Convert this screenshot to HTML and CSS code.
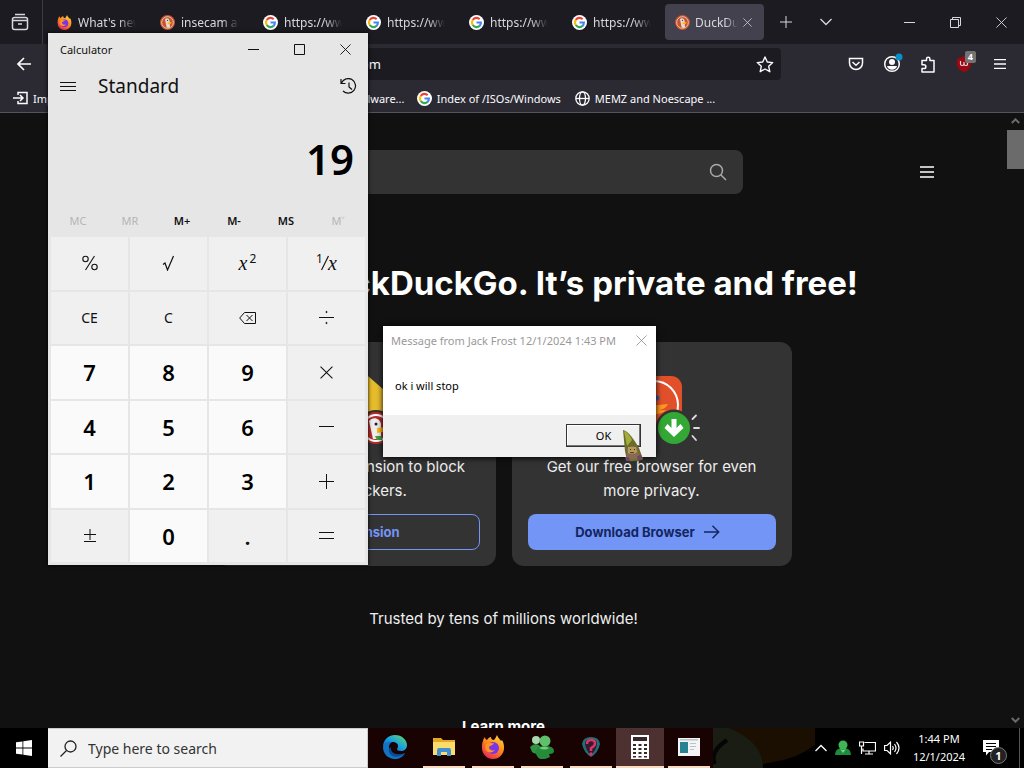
FILE: index.html
```html
<!DOCTYPE html>
<html lang="en">
<head>
<meta charset="utf-8">
<title>Desktop</title>
<link rel="stylesheet" href="styles.css">
</head>
<body>
<svg class="defs" aria-hidden="true">
  <defs>
    <linearGradient id="fox" x1="0.8" y1="0" x2="0.2" y2="1"><stop offset="0" stop-color="#ffd83a"/><stop offset=".45" stop-color="#ff8a1c"/><stop offset="1" stop-color="#e8215a"/></linearGradient>
    <linearGradient id="edge" x1="0" y1="1" x2="1" y2="0"><stop offset="0" stop-color="#0b55a8"/><stop offset=".5" stop-color="#1a9fe0"/><stop offset="1" stop-color="#6ade5c"/></linearGradient>
  </defs>
  <symbol id="i-firefox" viewBox="0 0 24 24"><path fill="url(#fox)" d="M2 6c0-1 1-3 2-4 0 2 1 2 2 3 1-2 3-3 4-3 0 2 1 3 3 3 1-1 2-3 3-5 1 3 3 4 4 6l1-1c2 3 2 6 2 8a11 11 0 0 1-22 0C1 10 1 8 2 6z"/><circle cx="12" cy="13" r="6" fill="#7a35e8"/><path fill="#ff9420" d="M5 9c3-2 5 0 8-1-1 3-4 2-5 4 0 3 3 4 6 3-3 4-9 3-10-2z"/></symbol>
  <symbol id="i-google" viewBox="0 0 18 18"><circle cx="9" cy="9" r="9" fill="#fff"/><g fill="none" stroke-width="2.500"><path stroke="#ea4335" d="M4.500 6A5.300 5.300 0 0 1 12.800 5"/><path stroke="#fbbc05" d="M4.500 12a5.500 5.500 0 0 1 0-6"/><path stroke="#34a853" d="M12.800 13A5.300 5.300 0 0 1 4.500 12"/><path stroke="#4285f4" d="M9 9h5.300c0 2-.6 3.200-1.700 4.200"/></g></symbol>
  <symbol id="i-duck" viewBox="0 0 18 18"><circle cx="9" cy="9" r="9" fill="#c9532f"/><circle cx="9" cy="9" r="7" fill="none" stroke="#e8d8cc" stroke-width="1"/><path fill="#e8dccf" d="M6 5c2-2 5-1 5.500 2l.5 8c-2 1-3 0-4 0z"/><path fill="#fdb813" d="M9 9l5-.5-1 2-4 .5z"/><circle cx="9" cy="6.500" r=".8" fill="#2d4f8e"/></symbol>
  <symbol id="i-x" viewBox="0 0 12 12"><path fill="none" stroke="currentColor" d="M.5.5l11 11M11.500.5l-11 11"/></symbol>
  <symbol id="i-menu" viewBox="0 0 16 14"><path fill="none" stroke="currentColor" stroke-width="1.500" d="M1 2h14M1 7h14M1 12h14"/></symbol>
</svg>

<div class="desktop">
  <section class="browser" aria-label="Firefox">
    <div class="tabstrip">
      <button class="recent" aria-label="Recent browsing"><svg width="18" height="18" viewBox="0 0 18 18" fill="none" stroke="currentColor" stroke-width="1.500"><path d="M4 1.500h10"/><rect x="1.500" y="4.500" width="15" height="12" rx="2"/><path d="M2 7.500h14M7 11h4"/></svg></button>
      <div class="tabs">
        <button class="tab"><svg class="fav"><use href="#i-firefox"/></svg><span>What's new</span></button>
        <button class="tab"><svg class="fav"><use href="#i-duck"/></svg><span>insecam at D</span></button>
        <button class="tab"><svg class="fav"><use href="#i-google"/></svg><span>https://www.</span></button>
        <button class="tab"><svg class="fav"><use href="#i-google"/></svg><span>https://www.</span></button>
        <button class="tab"><svg class="fav"><use href="#i-google"/></svg><span>https://www.</span></button>
        <button class="tab"><svg class="fav"><use href="#i-google"/></svg><span>https://www.</span></button>
        <button class="tab active"><svg class="fav"><use href="#i-duck"/></svg><span>DuckDuck</span><svg class="tabx"><use href="#i-x"/></svg></button>
      </div>
      <button class="stripbtn" aria-label="New tab"><svg width="12" height="12" viewBox="0 0 12 12" stroke="currentColor"><path d="M6 0v12M0 6h12"/></svg></button>
      <button class="stripbtn" aria-label="List tabs"><svg width="12" height="8" viewBox="0 0 12 8" fill="none" stroke="currentColor" stroke-width="1.300"><path d="M.5 1L6 6.500 11.500 1"/></svg></button>
      <div class="winbtns">
        <button aria-label="Minimize"><svg width="11" height="11" stroke="currentColor"><path d="M0 5.500h11"/></svg></button>
        <button aria-label="Restore"><svg width="11" height="11" fill="none" stroke="currentColor"><path d="M.5 2.500h8v8h-8zM2.500 2.500v-2h8v8h-2"/></svg></button>
        <button aria-label="Close"><svg width="11" height="11"><use href="#i-x"/></svg></button>
      </div>
    </div>

    <div class="navbar">
      <button class="navbtn back" aria-label="Back"><svg width="16" height="14" viewBox="0 0 16 14" fill="none" stroke="currentColor" stroke-width="1.700"><path d="M15 7H2M8 1L2 7l6 6"/></svg></button>
      <div class="urlbar">
        <input type="text" aria-label="Address" value="https://duckduckgo.com">
        <svg width="18" height="17" viewBox="0 0 18 17" fill="none" stroke="currentColor" stroke-width="1.400" stroke-linejoin="round"><path d="M9 1l2.300 5 5.400.6-4 3.700 1.100 5.400L9 13l-4.800 2.700 1.100-5.400-4-3.700L6.700 6z"/></svg>
      </div>
      <div class="navicons">
        <button class="navbtn" aria-label="Pocket"><svg width="16" height="14" viewBox="0 0 16 14" fill="none" stroke="currentColor" stroke-width="1.500"><path d="M1.500 1.500h13v4.500a6.500 6.500 0 0 1-13 0z"/><path d="M4.500 5L8 8.200 11.500 5"/></svg></button>
        <button class="navbtn" aria-label="Account"><svg width="18" height="18" viewBox="0 0 18 18" overflow="visible"><circle cx="9" cy="9" r="7.300" fill="none" stroke="currentColor" stroke-width="1.500"/><circle cx="9" cy="7" r="3" fill="currentColor"/><path fill="currentColor" d="M4 11h10c-1 5-9 5-10 0z"/><circle cx="16" cy="2" r="3.500" fill="#0a90c8"/></svg></button>
        <button class="navbtn" aria-label="Extensions"><svg width="16" height="17" viewBox="0 0 16 17" fill="none" stroke="currentColor" stroke-width="1.500" stroke-linejoin="round"><path d="M2 4.500h4.500V3a1.700 1.700 0 0 1 3.400 0v1.500H14V16H2v-3.500h2a1.800 1.800 0 0 0 0-3.700H2z"/></svg></button>
        <button class="navbtn ublock" aria-label="uBlock"><svg width="16" height="16" viewBox="0 0 16 16"><path fill="#9c0710" d="M8 0l7 3v6c0 3-4 6-7 7-3-1-7-4-7-7V3z"/><path fill="none" stroke="#ddd" stroke-width="1.200" d="M4.500 5v3q0 1.500 1.700 1.500T8 8V6v2q0 1.500 1.800 1.500T11.500 8V5"/></svg><b>4</b></button>
        <button class="navbtn" aria-label="Menu"><svg width="14" height="12"><use href="#i-menu"/></svg></button>
      </div>
    </div>

    <div class="bookmarks">
      <a href="#"><svg width="15" height="14" viewBox="0 0 15 14" fill="none" stroke="currentColor" stroke-width="1.500"><path d="M5 4V1.500h9v11H5V10M0 7h9.500M7 4l3 3-3 3"/></svg>Import bookmarks...</a>
      <a href="#" class="push"><svg width="15" height="15"><use href="#i-google"/></svg>Download malware...</a>
      <a href="#"><svg width="15" height="15"><use href="#i-google"/></svg>Index of /ISOs/Windows</a>
      <a href="#"><svg width="15" height="15" viewBox="0 0 15 15" fill="none" stroke="currentColor" stroke-width="1.300"><circle cx="7.500" cy="7.500" r="6.700"/><ellipse cx="7.500" cy="7.500" rx="3" ry="6.700"/><path d="M1 7.500h13"/></svg>MEMZ and Noescape ...</a>
    </div>

    <div class="viewport">
      <main class="page">
        <header class="ddghead">
          <form class="search"><input type="text" aria-label="Search"><button type="button" aria-label="Search"><svg width="18" height="18" viewBox="0 0 18 18" fill="none" stroke="currentColor" stroke-width="1.500"><circle cx="7.500" cy="7.500" r="6"/><path d="M12 12l5 5"/></svg></button></form>
          <button class="burger" aria-label="Menu"><svg width="16" height="14"><use href="#i-menu"/></svg></button>
        </header>
        <h1>Switch to DuckDuckGo. It’s private and free!</h1>
        <div class="cards">
          <article class="card">
            <svg width="96" height="88" viewBox="0 0 96 88"><path fill="#e8bd2c" d="M28 24q2-6 10-6h22l16 14v36H28z"/><circle cx="68" cy="70" r="18" fill="#333"/><circle cx="68" cy="70" r="16" fill="#b82c2c"/><circle cx="68" cy="70" r="13" fill="none" stroke="#fff" stroke-width="2"/><path fill="#eee" d="M61 63c4-5 11-3 12 3v15h-8z"/><circle cx="68" cy="66" r="1.500" fill="#223"/><path fill="#fdb813" d="M69 70l8-1-2 5-6 1z"/><path fill="#3ba33b" d="M67 78l7 0v4h-5z"/></svg>
            <p>Get our free extension to block more trackers.</p>
            <button class="cta ghost">Get Extension</button>
          </article>
          <article class="card">
            <svg width="96" height="88" viewBox="0 0 96 88"><rect x="22" y="18" width="56" height="54" rx="11" fill="#e2502a"/><circle cx="50" cy="47" r="24" fill="none" stroke="#fff" stroke-width="2"/><path fill="#fff" d="M32 34c6-8 16-6 18 4v24H38z"/><circle cx="53" cy="40" r="2.500" fill="#345e9e"/><path fill="#ff9a1f" d="M46 50c6-4 11-3 18-4-2 4-5 5-8 6 2 1 5 0 6 0-4 4-10 5-16 4z"/><circle cx="70" cy="70" r="18.500" fill="#333"/><circle cx="70" cy="70" r="16" fill="#34a834"/><path fill="#fff" d="M67.500 61h5v9l4-4 3 4-9.500 9-9.500-9 3-4 4 4z"/><path stroke="#ddd" stroke-width="1.800" stroke-linecap="round" d="M88.500 61l3.500-3.500M90 70h5M88.500 78l3.500 4"/></svg>
            <p>Get our free browser for even more privacy.</p>
            <button class="cta download">Download Browser<svg width="16" height="14" viewBox="0 0 16 14" fill="none" stroke="currentColor" stroke-width="1.400"><path d="M0 7h14.500M8.500.8L14.700 7l-6.200 6.200"/></svg></button>
          </article>
        </div>
        <p class="trusted">Trusted by tens of millions worldwide!</p>
        <h2>Learn more</h2>
      </main>
      <div class="scrollbar" aria-hidden="true">
        <svg width="9" height="6" viewBox="0 0 9 6" fill="none" stroke="currentColor" stroke-width="2"><path d="M.8 5L4.500 1.300 8.200 5"/></svg>
        <div class="thumb"></div>
        <svg width="9" height="6" viewBox="0 0 9 6" fill="none" stroke="currentColor" stroke-width="2"><path d="M.8 1l3.700 3.700L8.200 1"/></svg>
      </div>
    </div>
  </section>

  <footer class="taskbar">
    <button class="start" aria-label="Start"><svg width="16" height="16" viewBox="0 0 16 16" fill="#fff"><path d="M0 2.300L6.500 1.400v6.200H0zM7.300 1.300L16 0v7.600H7.300zM0 8.400h6.500v6.200L0 13.700zM7.300 8.400H16V16l-8.700-1.300z"/></svg></button>
    <label class="tasksearch"><svg width="17" height="17" viewBox="0 0 17 17" fill="none" stroke="#222" stroke-width="1.300"><circle cx="10.500" cy="6.500" r="5.500"/><path d="M6.500 10.500L.5 16.500"/></svg><input type="text" placeholder="Type here to search" aria-label="Type here to search"></label>
    <nav class="apps">
      <button aria-label="Edge"><svg width="24" height="24" viewBox="0 0 24 24"><path fill="url(#edge)" d="M0 12C0 5 5 0 12 0s12 5 12 10c0 4-3 6-6 6s-4-1-4-2 1-1 1-3c0-3-3-4-5-4-5 0-9 3-10 5z"/><path fill="#1273c4" d="M0 12c1-4 5-6 9-5-4 2-4 8 0 11s9 3 13 0c-2 4-6 6-10 6C5 24 0 19 0 12z"/><path fill="#0c4a94" d="M8 12c-1 6 5 9 14 6-4 4-10 5-14 2-3-3-3-6 0-8z"/></svg></button>
      <button class="open" aria-label="File Explorer"><svg width="22" height="20" viewBox="0 0 22 20"><path fill="#e5a824" d="M0 1h8l2 2h12v15H0z"/><path fill="#fbdc6a" d="M0 5h22v13H0z"/><path fill="#3f8fd2" d="M4 19v-6q0-2 2-2h10q2 0 2 2v6h-4v-4H8v4z"/></svg></button>
      <button class="open" aria-label="Firefox"><svg width="24" height="24"><use href="#i-firefox"/></svg></button>
      <button class="open" aria-label="Messenger"><svg width="24" height="24" viewBox="0 0 24 24"><circle cx="6" cy="5" r="4" fill="#a8d8ae"/><path fill="#2f9444" d="M0 12q6-6 11 0v6q-6 2-9-1z"/><circle cx="15" cy="6" r="5.500" fill="#5fc06c"/><path fill="#258a3a" d="M5 17q3-7 10-6 9 0 9 5 0 3-5 3l1 3q-10 5-13-1z"/><path fill="#74ca7d" d="M9 13q6-3 10 0-4 3-10 0z"/></svg></button>
      <button class="open" aria-label="Help tool"><svg width="20" height="22" viewBox="0 0 20 22"><path fill="#1f6f78" d="M1 8Q2 1 10 1t9 7q-2 9-9 13Q3 17 1 8z"/><path fill="#3a1630" d="M4 8q0-5 6-5t6 5q-1 7-6 11Q5 15 4 8z"/><path fill="none" stroke="#d03a64" stroke-width="2.500" d="M6 8q0-4 4-4t4 3.500Q14 10 10 12v3"/><circle cx="10" cy="18" r="1.700" fill="#d03a64"/></svg></button>
      <button class="open current" aria-label="Calculator"><svg width="18" height="24" viewBox="0 0 18 24"><path fill="#fff" d="M0 0h18v24H0z"/><path fill="#38282a" d="M2 2h14v4H2zM2 9h3v2H2zM7.500 9h3v2h-3zM13 9h3v2h-3zM2 13h3v2H2zM7.500 13h3v2h-3zM13 13h3v2h-3zM2 17h3v2H2zM7.500 17h3v2h-3zM13 17h3v2h-3zM2 21h3v1.500H2zM7.500 21h3v1.500h-3zM13 21h3v1.500h-3z"/></svg></button>
      <button class="open" aria-label="Message"><svg width="22" height="18" viewBox="0 0 22 18"><path fill="#f4f4f4" d="M0 0h22v18H0z"/><path fill="#278391" d="M2 4h8v11H2z"/><path fill="#b8c4ca" d="M2 1h18v1.500H2zM12 5h6v1h-6zM12 8h6v1h-6zM12 11h4v1h-4z"/></svg></button>
    </nav>
    <svg class="wall" viewBox="0 0 110 40" preserveAspectRatio="xMinYMid slice" aria-hidden="true"><path fill="#1a0f00" d="M0 0h110v10Q90 30 60 34L30 40H0z"/><path fill="#191d13" d="M0 40V0h16q34 14 34 40z"/><path stroke="#050505" stroke-width="4" fill="none" d="M14 12Q-4 24 2 36"/></svg>
    <div class="tray">
      <svg width="12" height="8" viewBox="0 0 12 8" fill="none" stroke="#fff" stroke-width="1.300"><path d="M.5 7L6 1.500 11.500 7"/></svg>
      <svg width="16" height="16" viewBox="0 0 16 16"><path fill="#1d8c3a" d="M0 15q0-6 6-7h4q6 1 6 7z"/><circle cx="8" cy="5" r="4.500" fill="#3fb558"/><path fill="#7bd486" d="M5 9q3 2 6 0l-3 4z"/></svg>
      <svg width="17" height="14" viewBox="0 0 17 14" fill="none" stroke="#fff" stroke-width="1.200"><path d="M5.500 1.500h11v8.500H4V7.500M10 10v3M6 13h8M.5 1h4v4h-4zM2.500 5v8"/></svg>
      <svg width="16" height="14" viewBox="0 0 16 14" fill="none" stroke="#fff" stroke-width="1.200"><path d="M.6 4.500h2.400L6.500 1.200v11.600L3 9.500H.6zM8.500 5q1.500 2 0 4M10.500 3q3 4 0 8M12.500 1q5 6 0 12"/></svg>
      <time class="clock"><span>1:44 PM</span><span>12/1/2024</span></time>
      <button class="notes" aria-label="Notifications"><svg width="16" height="16" viewBox="0 0 16 16"><path fill="#fff" d="M0 0h16v12H6l-3 3.500V12H0z"/><path stroke="#000" d="M3 3.500h10M3 6.500h10M3 9.500h6"/></svg><b>1</b></button>
    </div>
  </footer>

  <section class="calc" aria-label="Calculator">
    <div class="calctitle"><span>Calculator</span>
      <div class="winbtns">
        <button aria-label="Minimize"><svg width="11" height="11" stroke="currentColor"><path d="M0 5.500h11"/></svg></button>
        <button aria-label="Maximize"><svg width="11" height="11" fill="none" stroke="currentColor"><path d="M.5.5h10v10H.5z"/></svg></button>
        <button aria-label="Close"><svg width="11" height="11"><use href="#i-x"/></svg></button>
      </div>
    </div>
    <div class="calchead">
      <button aria-label="Open navigation"><svg width="16" height="11" stroke="currentColor"><path d="M0 1.500h16M0 5.500h16M0 9.500h16"/></svg></button>
      <h3>Standard</h3>
      <button aria-label="History"><svg width="18" height="17" viewBox="0 0 18 17" fill="none" stroke="currentColor" stroke-width="1.200"><path d="M1 1v4.500h4.500M1.500 5A7.300 7.300 0 1 1 3 13M9 4.500v4.500l3 2.500"/></svg></button>
    </div>
    <output class="result">19</output>
    <div class="memory">
      <button disabled>MC</button><button disabled>MR</button><button>M+</button><button>M-</button><button>MS</button><button disabled>M˅</button>
    </div>
    <div class="keys">
      <button aria-label="Percent"><svg width="16" height="16" viewBox="0 0 16 16" fill="none" stroke="currentColor" stroke-width="1.100"><circle cx="3.500" cy="4" r="2.700"/><circle cx="12.500" cy="12" r="2.700"/><path d="M12.500 1l-9 14"/></svg></button>
      <button aria-label="Square root"><svg width="14" height="16" viewBox="0 0 14 16" fill="none" stroke="currentColor" stroke-width="1.200"><path d="M1 9.500l2-1.500 2.500 7L11.500 1"/></svg></button>
      <button class="math"><i>x</i><sup>2</sup></button>
      <button class="math" aria-label="Reciprocal"><sup>1</sup><svg width="8" height="16" viewBox="0 0 8 16" stroke="currentColor" stroke-width="1.200"><path d="M7.500 1L.5 15"/></svg><i>x</i></button>
      <button>CE</button><button>C</button>
      <button aria-label="Backspace"><svg width="17" height="12" viewBox="0 0 17 12" fill="none" stroke="currentColor"><path d="M5.500.5h11v11h-11L.7 6zM7.500 3l6 6M13.500 3l-6 6"/></svg></button>
      <button aria-label="Divide"><svg width="15" height="15" stroke="currentColor" fill="currentColor"><path d="M0 7.500h15"/><circle cx="7.500" cy="2" r=".6"/><circle cx="7.500" cy="13" r=".6"/></svg></button>
      <button class="num">7</button><button class="num">8</button><button class="num">9</button>
      <button aria-label="Multiply"><svg width="13" height="13"><use href="#i-x"/></svg></button>
      <button class="num">4</button><button class="num">5</button><button class="num">6</button>
      <button aria-label="Minus"><svg width="15" height="15" stroke="currentColor"><path d="M0 7.500h15"/></svg></button>
      <button class="num">1</button><button class="num">2</button><button class="num">3</button>
      <button aria-label="Plus"><svg width="15" height="15" stroke="currentColor"><path d="M0 7.500h15M7.500 0v15"/></svg></button>
      <button aria-label="Negate"><svg width="12" height="14" stroke="currentColor"><path d="M0 5.500h12M6 0v11M0 12.500h12"/></svg></button>
      <button class="num">0</button><button class="dot">.</button>
      <button aria-label="Equals"><svg width="15" height="15" stroke="currentColor"><path d="M0 4.500h15M0 10.500h15"/></svg></button>
    </div>
  </section>

  <section class="dialog" role="dialog" aria-labelledby="msg">
    <div class="dlgtitle"><span id="msg">Message from Jack Frost 12/1/2024 1:43 PM</span><button aria-label="Close"><svg width="11" height="11"><use href="#i-x"/></svg></button></div>
    <p>ok i will stop</p>
    <div class="dlgfoot"><button>OK</button></div>
  </section>

  <svg class="cursor" width="22" height="32" viewBox="0 0 22 32" aria-hidden="true"><path fill="#6b6e2a" d="M1 0q4 1 8 6t8 12l4 11q-5 3-16 2l-2-10z"/><path fill="#a3ad3c" d="M2 1q5 2 8 9l-5 6z"/><path fill="#876b50" d="M5 18q6-4 10 0l3 9q-6 4-13 2z"/><path fill="#b79a5a" d="M6 17h8l1 5q-4 4-9 1z"/><path stroke="#3a2b1c" fill="none" d="M8 19.500h1M12 19.500h1M8 23q2-1 4 0"/><path fill="#734466" d="M3 27h4l1 4H4zM15 26l4-1 2 4-5 1z"/></svg>
</div>
</body>
</html>
```
FILE: styles.css
```css
* { box-sizing: border-box; }
body { margin: 0; background: #000; font-family: "Noto Sans", "Open Sans", sans-serif; font-size: 12px; }
button { border: 0; padding: 0; background: none; color: inherit; font: inherit; display: flex; align-items: center; justify-content: center; }
input { border: 0; padding: 0; background: none; color: inherit; font: inherit; min-width: 0; outline: 0; }
h1, h2, h3, p { margin: 0; }
svg { flex: none; display: block; }
.defs { position: absolute; width: 0; height: 0; }

.desktop { position: relative; height: 100vh; display: grid; grid-template-columns: minmax(0, 1fr); grid-template-rows: minmax(0, 1fr) 40px; overflow: hidden; }

/* Browser */
.browser { display: flex; flex-direction: column; min-height: 0; color: #fbfbfe; background: #2b2a33; }
.tabstrip { display: flex; height: 44px; background: #1c1b22; align-items: center; color: #d8d8dc; }
.recent { width: 43px; height: 44px; border-right: 1px solid #3c3b44; padding-right: 3px; }
.tabs { display: flex; gap: 4px; padding: 0 2px 0 4px; }
.tab { width: 99px; height: 36px; padding: 0 10px; gap: 6px; border-radius: 4px; justify-content: flex-start; }
.tab span { flex: 1; min-width: 0; text-align: left; white-space: nowrap; overflow: hidden; -webkit-mask-image: linear-gradient(to right, #000 70%, transparent); mask-image: linear-gradient(to right, #000 70%, transparent); }
.tab.active { background: #42414d; gap: 5px; }
.fav { width: 15px; height: 15px; }
.tabx { width: 9px; height: 9px; margin-right: 2px; }
.stripbtn { width: 40px; height: 44px; }
.winbtns { display: flex; margin-left: auto; align-self: stretch; }
.winbtns button { width: 46px; }

.navbar { display: flex; align-items: center; height: 40px; }
.navbtn { width: 36px; height: 36px; }
.back { margin-left: 6px; }
.urlbar { flex: 1; display: flex; align-items: center; height: 32px; margin: 0 57px 0 116px; padding-right: 7px; border-radius: 4px; background: #1c1b22; }
.urlbar input { flex: 1; padding-left: 74px; font-size: 13px; }
.navicons { display: flex; padding-right: 6px; }
.ublock { position: relative; }
.ublock b { position: absolute; right: 6px; top: 5px; padding: 0 3px; border-radius: 2px; background: #737373; color: #fff; font-size: 9px; line-height: 12px; }

.bookmarks { display: flex; align-items: center; gap: 14px; height: 29px; padding-left: 13px; border-bottom: 1px solid #55545c; }
.bookmarks a { display: flex; align-items: center; gap: 5px; color: inherit; text-decoration: none; white-space: nowrap; font-size: 11px; }
.bookmarks .push { width: 127px; margin-left: 123px; }

.viewport { flex: 1; min-height: 0; display: flex; background: #111; font-family: Inter, "Open Sans", sans-serif; }
.page { flex: 1; min-width: 0; overflow: hidden; text-align: center; color: #eee; }
.ddghead { display: flex; align-items: center; justify-content: space-between; padding: 37px 72px 0 150px; }
.search { flex: 0 1 593px; display: flex; height: 44px; padding: 0 16px; border-radius: 8px; background: #333; color: #aaa; }
.search input { flex: 1; }
.burger { color: #fff; }
h1 { margin-top: 67px; font-size: 33px; line-height: 44px; color: #fff; white-space: nowrap; }
.cards { display: flex; justify-content: center; gap: 16px; margin-top: 37px; }
.card { width: 280px; padding: 16px; border-radius: 12px; background: #333; display: flex; flex-direction: column; align-items: center; }
.card p { width: 232px; margin: 9px 0 11px; font-size: 15px; line-height: 24px; }
.cta { align-self: stretch; height: 36px; gap: 9px; border-radius: 8px; background: #7295f6; color: #14265e; font-size: 13px; font-weight: 700; }
.download { padding-right: 8px; }
.ghost { border: 1px solid #7295f6; background: none; color: #7295f6; }
.trusted { margin-top: 41px; font-size: 15px; line-height: 24px; }
h2 { margin-top: 84px; font-size: 15px; line-height: 24px; color: #fff; }
.scrollbar { width: 17px; display: flex; flex-direction: column; align-items: center; padding: 5px 0; color: #6b6b6b; }
.thumb { width: 17px; height: 39px; margin: 6px 0 auto; background: #6b6b6b; }

/* Taskbar */
.taskbar { display: flex; background: #000; color: #fff; }
.start { width: 48px; }
.tasksearch { width: 320px; display: flex; align-items: center; gap: 11px; padding: 0 12px; background: #f2f2f2; border: 1px solid #ccc; border-left: 0; color: #333; }
.tasksearch input { flex: 1; font-size: 14px; }
.tasksearch input::placeholder { color: #333; opacity: 1; }
.apps { display: flex; gap: 1px; background: #190202; padding: 0 0 0 3px; }
.apps button { width: 48px; border-bottom: 2px solid transparent; background-clip: padding-box; }
.apps .open { border-image: linear-gradient(to right, transparent 4px, #fbd9bd 4px, #fbd9bd 44px, transparent 44px) 1; border-style: solid; border-width: 0 0 2px; }
.apps .current { background: #4d3130; border-image: none; border-color: #fbd9bd; }
.wall { flex: 1; width: 0; min-width: 0; height: 40px; }
.tray { display: flex; align-items: center; gap: 8px; }
.clock { display: flex; flex-direction: column; align-items: center; width: 62px; font-size: 11px; line-height: 18px; }
.notes { position: relative; width: 42px; height: 40px; border-right: 1px solid #555; padding-right: 16px; margin-right: 4px; }
.notes b { position: absolute; right: 12px; bottom: 4px; width: 17px; height: 17px; border: 1px solid #777; border-radius: 50%; background: #222; font-size: 11px; line-height: 15px; }

/* Calculator window */
.calc { position: absolute; left: 48px; top: 33px; width: 320px; height: 532px; display: flex; flex-direction: column; background: #e6e6e6; color: #111; box-shadow: 0 0 4px #000; }
.calctitle { display: flex; align-items: center; height: 32px; padding-left: 12px; font-size: 11px; }
.calchead { display: flex; align-items: center; height: 42px; padding: 0 10px 0 12px; gap: 22px; }
.calchead h3 { flex: 1; font-size: 19px; font-weight: 400; }
.result { flex: 1; padding: 22px 14px 0 0; text-align: right; font-size: 42px; line-height: 60px; font-weight: 600; color: #000; }
.memory { display: grid; grid-template-columns: repeat(6, 1fr); height: 34px; margin: 0 4px; font-size: 11px; font-weight: 600; }
.memory button:disabled { color: #b5b5b5; font-weight: 400; }
.keys { display: grid; grid-template-columns: repeat(4, 1fr); grid-auto-rows: 1fr; gap: 2px; height: 328px; padding: 0 3px 3px; }
.keys button { background: #f0f0f0; font-size: 14px; }
.keys .num { background: #fafafa; font-size: 22px; line-height: 28px; font-weight: 600; color: #000; }
.keys .dot { font-size: 22px; font-weight: 600; }
.keys .math { font-family: "Liberation Serif", serif; font-size: 20px; line-height: 20px; }
.math sup { align-self: center; margin-bottom: 8px; font-family: "Noto Sans", sans-serif; font-size: 12px; line-height: 12px; }
.math i + sup { margin-left: 2px; }
.math svg { margin: 0 -1px 0 -2px; }

/* Message box */
.dialog { position: absolute; left: 383px; top: 326px; width: 273px; background: #fff; color: #000; box-shadow: 0 1px 6px #000; }
.dlgtitle { display: flex; align-items: center; justify-content: space-between; height: 28px; padding: 0 9px 0 8px; font-size: 11px; color: #999; white-space: nowrap; }
.dialog p { padding: 23px 12px 20px; font-size: 11px; line-height: 18px; }
.dlgfoot { display: flex; justify-content: flex-end; padding: 9px 15px 10px; background: #f0f0f0; }
.dlgfoot button { width: 75px; height: 23px; border: 1px solid #333; background: #f0f0f0; box-shadow: inset -1px -1px #777, inset 1px 1px #fff; font-size: 11px; line-height: 20px; }

.cursor { position: absolute; left: 622px; top: 430px; }
```
